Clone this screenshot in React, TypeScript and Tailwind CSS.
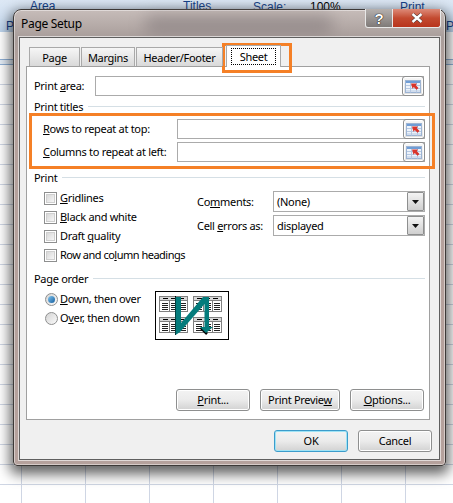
import React from "react";

const RefIcon = () => (
  <svg width="16" height="13" viewBox="0 0 16 13">
    <rect x="0.5" y="0.5" width="15" height="12" fill="#eef3fa" stroke="#9db4d3" />
    <rect x="1" y="1" width="14" height="2" fill="#6f9dd6" />
    <path d="M1 5.5H15M1 8.5H15M1 11H15" stroke="#b5c8e2" strokeWidth="1" />
    <path d="M5.5 3V12.5M11.5 3V12.5" stroke="#b5c8e2" strokeWidth="1" />
    <path d="M6 3.5L12 3.5L10.8 5.2L13.5 8L11.5 9.8L8.8 7L7.5 8.8Z" fill="#d9342b" />
  </svg>
);

const RefButton = () => (
  <div className="flex h-[20px] w-[22px] shrink-0 items-center justify-center rounded-[3px] border border-[#8e8f8f] bg-gradient-to-b from-[#f8f8f8] to-[#dedede] shadow-[inset_0_0_0_1px_#fff]">
    <RefIcon />
  </div>
);

const RefInput = ({ w }: { w: string }) => (
  <div className={`flex h-[20px] items-center justify-end border border-[#ababab] bg-white ${w}`}>
    <div className="-mr-px">
      <RefButton />
    </div>
  </div>
);

const Section = ({ title, line }: { title: string; line: string }) => (
  <div className="flex h-[14px] items-center pl-[7px]">
    <span className="leading-none">{title}</span>
    <div className={`ml-[5px] h-px bg-[#d5dfe5] ${line}`} />
  </div>
);

const Check = ({ children }: { children: React.ReactNode }) => (
  <div className="flex h-[19px] items-center">
    <div className="flex h-[13px] w-[13px] items-center justify-center border border-[#8e8f8f] bg-white">
      <div className="h-[9px] w-[9px] border border-[#cfcfcf] bg-gradient-to-br from-[#d8d8d8] to-[#f6f6f6]" />
    </div>
    <span className="-mt-[2px] ml-[3px] leading-none">{children}</span>
  </div>
);

const Radio = ({ on, children }: { on?: boolean; children: React.ReactNode }) => (
  <div className="flex h-[19px] items-center">
    <div className="flex h-[13px] w-[13px] items-center justify-center rounded-full border border-[#8e8f8f] bg-gradient-to-br from-[#d4d4d4] to-[#fafafa]">
      {on && <div className="h-[7px] w-[7px] rounded-full bg-gradient-to-br from-[#7fc4ee] to-[#0f5f9f]" />}
    </div>
    <span className="-mt-[2px] ml-[2px] leading-none">{children}</span>
  </div>
);

const Select = ({ value }: { value: string }) => (
  <div className="flex h-[21px] w-[152px] items-center justify-between border border-[#ababab] bg-white pl-[3px]">
    <span className="leading-none">{value}</span>
    <div className="flex h-[19px] w-[17px] items-center justify-center rounded-[1px] border border-[#8e8f8f] bg-gradient-to-b from-[#f4f4f4] to-[#cfcfcf]">
      <svg width="7" height="4" viewBox="0 0 7 4">
        <path d="M0 0H7L3.5 4Z" fill="#111" />
      </svg>
    </div>
  </div>
);

const Btn = ({ w, ok, children }: { w: string; ok?: boolean; children: React.ReactNode }) => (
  <div
    className={`flex h-[22px] items-center justify-center rounded-[3px] border bg-gradient-to-b from-[#f3f3f3] via-[#ebebeb] to-[#d2d2d2] ${w} ${
      ok ? "border-[#3c9ccb] shadow-[inset_0_0_0_1px_#9fe3f5]" : "border-[#8e8f8f] shadow-[inset_0_0_0_1px_#fff]"
    }`}
  >
    <span className="-mt-[2px] leading-none">{children}</span>
  </div>
);

const Tab = ({ w, children }: { w: string; children: React.ReactNode }) => (
  <div className={`flex h-[19px] items-center justify-center border border-b-0 border-[#a9a9a9] bg-gradient-to-b from-[#f6f6f6] to-[#d9d9d9] ${w}`}>
    <span className="leading-none">{children}</span>
  </div>
);

const MiniPage = ({ x, y }: { x: number; y: number }) => (
  <g transform={`translate(${x} ${y})`} shapeRendering="crispEdges">
    <rect x="0.5" y="0.5" width="28" height="15" fill="#fff" stroke="#808080" />
    <rect x="0.5" y="0.5" width="28" height="4" fill="#d8d8d8" stroke="#808080" />
    <path d="M4 2.5H9M12 2.5H17M20 2.5H25" stroke="#000" strokeWidth="1" />
    <path d="M3 7.5H9M3 9.5H9M3 11.5H9M3 13.5H9M12 7.5H18M12 9.5H18M12 11.5H18M12 13.5H18M21 7.5H27M21 9.5H27M21 11.5H27M21 13.5H27" stroke="#222" strokeWidth="1" />
    <path d="M10.5 4V15M19.5 4V15" stroke="#808080" strokeWidth="1" />
  </g>
);

const OrderPreview = () => (
  <svg width="74" height="49" viewBox="0 0 74 49" className="shrink-0">
    <rect x="0.5" y="0.5" width="73" height="48" fill="#fff" stroke="#000" />
    <MiniPage x={4} y={5} />
    <MiniPage x={38} y={5} />
    <MiniPage x={4} y={26} />
    <MiniPage x={38} y={26} />
    <path d="M20.5 5V44" stroke="#000" strokeWidth="1" />
    <path d="M46 37L52 43" stroke="#000" strokeWidth="2.5" fill="none" />
    <path d="M20.5 6H26V32L48 6H54V36H58L51 42L45 36H49.5V13L25 41L20.5 44Z" fill="#047c7c" />
  </svg>
);

export default function App() {
  return (
    <div className="relative h-[503px] w-[453px] overflow-hidden bg-white bg-[linear-gradient(to_right,#cfd6e4_1px,transparent_1px),linear-gradient(to_bottom,#cfd6e4_1px,transparent_1px)] bg-[size:64px_20px] bg-[position:21px_4px] font-['Noto_Sans',sans-serif] text-[11px] tracking-[-0.3px] text-black">
      {/* Excel ribbon behind the dialog */}
      <div className="relative h-[32px] overflow-hidden bg-gradient-to-b from-[#dde8f5] via-[#d3e2f3] to-[#bcd3ec] font-['Liberation_Sans',sans-serif] text-[12px] tracking-normal text-[#15428b]">
        <span className="absolute left-[30px] top-[-3px]">Area</span>
        <span className="absolute left-[183px] top-[-3px]">Titles</span>
        <span className="absolute left-[253px] top-[-2px]">Scale:</span>
        <span className="absolute left-[310px] top-[-2px] text-black">100%</span>
        <span className="absolute left-[400px] top-[-2px]">Print</span>
        <span className="absolute left-[6px] top-[17px]">P</span>
        <span className="absolute left-[446px] top-[17px]">P</span>
      </div>
      <div className="h-[27px] bg-white" />
      <div className="h-[6px] border-y border-[#8fb0d6] bg-[#e3ecf6]" />

      {/* Dialog window */}
      <div className="absolute left-[13px] top-[9px] flex h-[457px] w-[433px] flex-col rounded-t-[8px] rounded-b-[4px] border border-[#3d3937] bg-[linear-gradient(to_bottom,#c6bcb9_0px,#a99e9b_27px,#b5a19c_60px,#b5a19c_100%)] px-[5px] pb-[5px] shadow-[0_5px_13px_3px_rgba(0,0,0,0.62),inset_0_0_0_1px_rgba(255,255,255,0.45)]">
        <div className="absolute left-[130px] top-[6px] h-[18px] w-[190px] rounded-full bg-[#7f7678] opacity-60 blur-[8px]" />

        {/* Caption buttons */}
        <div className="absolute right-[4px] top-[-1px] flex h-[19px]">
          <div className="flex w-[28px] items-center justify-center rounded-bl-[3px] border border-t-0 border-[#e8e8e8] bg-gradient-to-b from-[#b5b0ae] to-[#7f7a78] font-['Liberation_Sans',sans-serif] text-[15px] font-bold leading-none text-white [text-shadow:0_0_1px_#000,0_0_1px_#000]">
            ?
          </div>
          <div className="flex w-[48px] items-center justify-center rounded-br-[3px] border border-l-0 border-t-0 border-[#e8e8e8] bg-gradient-to-b from-[#dd8a78] via-[#c34a30] to-[#b8341c]">
            <svg width="12" height="10" viewBox="0 0 12 10">
              <path d="M1.5 1L10.5 9M10.5 1L1.5 9" stroke="#3a2a28" strokeWidth="3.4" />
              <path d="M1.5 1L10.5 9M10.5 1L1.5 9" stroke="#fff" strokeWidth="2.4" />
            </svg>
          </div>
        </div>

        {/* Title */}
        <div className="relative flex h-[27px] shrink-0 items-center pl-[2px] text-[12px] leading-none">Page Setup</div>

        {/* Client area */}
        <div className="relative flex min-h-0 flex-1 flex-col border border-[#5f5f5f] bg-[#f0f0f0] pl-[6px] pr-[9px] pt-[9px] shadow-[0_0_0_1px_rgba(255,255,255,0.6)]">
          {/* Tabs */}
          <div className="relative z-10 flex h-[19px] items-end pl-[3px]">
            <Tab w="w-[51px]">Page</Tab>
            <Tab w="ml-px w-[54px]">Margins</Tab>
            <Tab w="ml-px w-[87px]">Header/Footer</Tab>
            <div className="relative z-10 ml-[3px] -mb-px flex h-[22px] w-[55px] items-center justify-center border border-b-0 border-[#a9a9a9] bg-white">
              <span className="border border-dotted border-black px-[8px] py-[2px] leading-none">Sheet</span>
            </div>
          </div>

          {/* Sheet pane */}
          <div className="flex h-[354px] flex-col border border-[#a0a0a0] bg-white">
            <div className="mt-[9px] flex h-[20px] items-center pl-[7px]">
              <span className="-mt-[2px] w-[61px] leading-none">
                Print <u>a</u>rea:
              </span>
              <RefInput w="w-[329px]" />
            </div>

            <div className="mt-[3px]">
              <Section title="Print titles" line="w-[337px]" />
            </div>

            <div className="mt-[6px] flex h-[20px] items-center pl-[16px]">
              <span className="-mt-[2px] w-[134px] leading-none">
                <u>R</u>ows to repeat at top:
              </span>
              <RefInput w="w-[248px]" />
            </div>
            <div className="mt-[3px] flex h-[20px] items-center pl-[16px]">
              <span className="-mt-[2px] w-[134px] leading-none">
                <u>C</u>olumns to repeat at left:
              </span>
              <RefInput w="w-[248px]" />
            </div>

            <div className="mt-[8px]">
              <Section title="Print" line="w-[363px]" />
            </div>

            <div className="mt-[5px] flex pl-[17px]">
              <div className="w-[153px]">
                <Check>
                  <u>G</u>ridlines
                </Check>
                <Check>
                  <u>B</u>lack and white
                </Check>
                <Check>
                  Draft <u>q</u>uality
                </Check>
                <Check>
                  <span className="tracking-[-0.5px]">
                    Row and co<u>l</u>umn headings
                  </span>
                </Check>
              </div>
              <div className="mt-[2px] flex flex-col gap-[3px]">
                <div className="flex items-center">
                  <span className="w-[76px] leading-none">
                    Co<u>m</u>ments:
                  </span>
                  <Select value="(None)" />
                </div>
                <div className="flex items-center">
                  <span className="w-[76px] leading-none">
                    Cell <u>e</u>rrors as:
                  </span>
                  <Select value="displayed" />
                </div>
              </div>
            </div>

            <div className="mt-[6px]">
              <Section title="Page order" line="w-[332px]" />
            </div>

            <div className="mt-[5px] flex pl-[18px]">
              <div className="w-[110px]">
                <Radio on>
                  <u>D</u>own, then over
                </Radio>
                <Radio>
                  O<u>v</u>er, then down
                </Radio>
              </div>
              <div className="mt-px">
                <OrderPreview />
              </div>
            </div>

            <div className="mt-auto flex justify-end gap-[10px] pb-[8px] pr-[5px]">
              <Btn w="w-[74px]">
                <u>P</u>rint...
              </Btn>
              <Btn w="w-[80px]">
                Print Previe<u>w</u>
              </Btn>
              <Btn w="w-[74px]">
                <u>O</u>ptions...
              </Btn>
            </div>
          </div>

          {/* Dialog buttons */}
          <div className="mt-[10px] -mr-[2px] flex justify-end gap-[10px]">
            <Btn w="w-[74px]" ok>
              OK
            </Btn>
            <Btn w="w-[74px]">Cancel</Btn>
          </div>
        </div>
      </div>

      {/* Orange annotation boxes */}
      <div className="pointer-events-none absolute left-[222px] top-[43px] h-[30px] w-[70px] border-[3px] border-[#f58026]" />
      <div className="pointer-events-none absolute left-[29px] top-[113px] h-[56px] w-[406px] border-[3px] border-[#f58026]" />
    </div>
  );
}
